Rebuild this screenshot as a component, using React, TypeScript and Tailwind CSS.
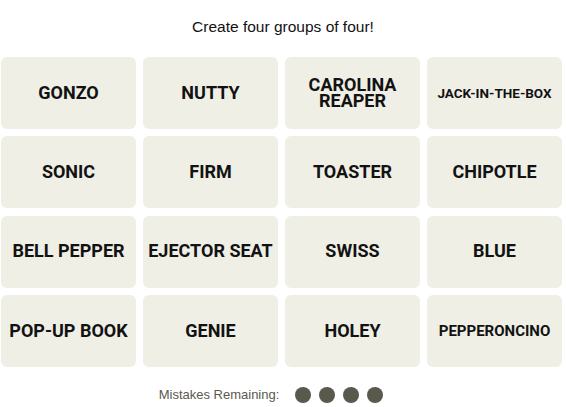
const WORDS = [
  'GONZO',
  'NUTTY',
  'CAROLINA REAPER',
  'JACK-IN-THE-BOX',
  'SONIC',
  'FIRM',
  'TOASTER',
  'CHIPOTLE',
  'BELL PEPPER',
  'EJECTOR SEAT',
  'SWISS',
  'BLUE',
  'POP-UP BOOK',
  'GENIE',
  'HOLEY',
  'PEPPERONCINO',
];

const SIZE: Record<string, string> = {
  'JACK-IN-THE-BOX': 'text-[13.5px]',
  PEPPERONCINO: 'text-[15px]',
};

function Tile({ word }: { word: string }) {
  return (
    <div className="flex h-[72px] items-center justify-center rounded-md bg-[#efefe6] px-[4px] text-center">
      <span
        className={`font-[Roboto,sans-serif] font-bold uppercase leading-[16.5px] text-[#121212] ${
          SIZE[word] ?? 'text-[18px]'
        }`}
      >
        {word}
      </span>
    </div>
  );
}

export default function App() {
  return (
    <div className="min-h-[407px] w-[566px] bg-white font-['Liberation_Sans',Arial,sans-serif]">
      <p className="pt-[17px] text-center text-[15.5px] leading-[20px] text-[#121212]">
        Create four groups of four!
      </p>
      <div className="mt-[20px] ml-[1px] grid w-[561px] grid-cols-4 gap-x-[7px] gap-y-[7.33px]">
        {WORDS.map((w) => (
          <Tile key={w} word={w} />
        ))}
      </div>
      <div className="mt-[20px] flex items-center justify-center pr-[24px]">
        <span className="text-[13px] leading-[16px] text-[#5a594e]">
          Mistakes Remaining:
        </span>
        <div className="ml-[16px] flex gap-[8px]">
          {[0, 1, 2, 3].map((i) => (
            <span key={i} className="h-[16px] w-[16px] rounded-full bg-[#5a594e]" />
          ))}
        </div>
      </div>
    </div>
  );
}
